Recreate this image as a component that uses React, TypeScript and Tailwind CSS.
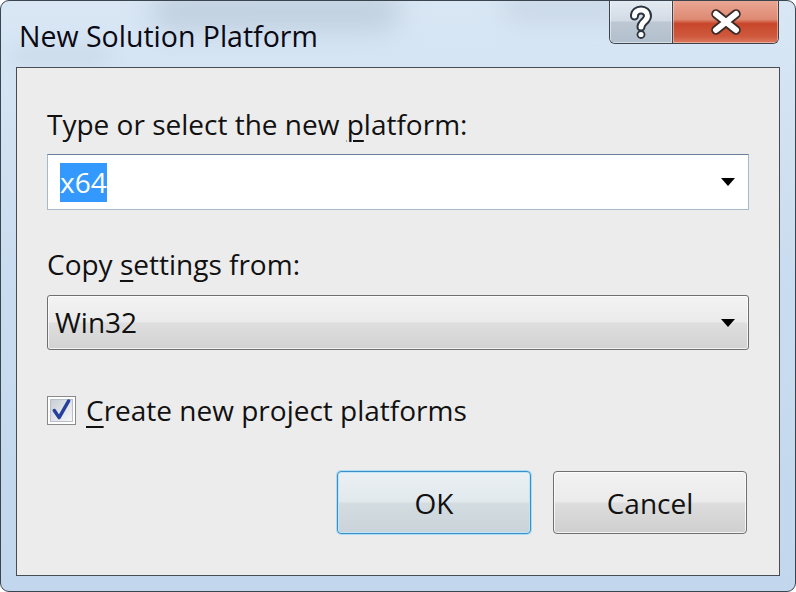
const font = { fontFamily: '"Open Sans", "Noto Sans", sans-serif' };

function Arrow() {
  return (
    <svg width="14" height="8" viewBox="0 0 14 8" className="shrink-0">
      <path d="M0 0 L14 0 L7 8 Z" fill="#000" />
    </svg>
  );
}

function HelpGlyph() {
  return (
    <svg width="26" height="34" viewBox="-13 -17 26 34">
      <path d="M-6.5 -6 C-6.5 -14, 6.5 -14, 6.5 -6 C6.5 -1, 0 0, 0 5" fill="none" stroke="#2b3440" strokeWidth="9" strokeLinecap="round" strokeLinejoin="round" />
      <circle cx="0" cy="12.5" r="4.4" fill="#2b3440" />
      <path d="M-6.5 -6 C-6.5 -14, 6.5 -14, 6.5 -6 C6.5 -1, 0 0, 0 5" fill="none" stroke="#ffffff" strokeWidth="5" strokeLinecap="round" strokeLinejoin="round" />
      <circle cx="0" cy="12.5" r="2.6" fill="#ffffff" />
    </svg>
  );
}

function CloseGlyph() {
  return (
    <svg width="32" height="26" viewBox="-16 -13 32 26">
      <path d="M-10 -8 L10 8 M10 -8 L-10 8" fill="none" stroke="#3a2a28" strokeWidth="9.5" strokeLinecap="round" />
      <path d="M-10 -8 L10 8 M10 -8 L-10 8" fill="none" stroke="#ffffff" strokeWidth="6" strokeLinecap="round" />
    </svg>
  );
}

function Check() {
  return (
    <div className="w-[29px] h-[29px] border border-[#8a8a8a] bg-white p-[2px] shrink-0">
      <div className="w-full h-full border border-[#b8bfc8] bg-[linear-gradient(135deg,#c9ced5_0%,#e4e7eb_60%,#f4f5f7_100%)] flex items-center justify-center">
        <svg width="22" height="22" viewBox="0 0 22 22">
          <path d="M3.5 11.5 L8.5 19 L18.5 1.5" fill="none" stroke="#263f9c" strokeWidth="3.6" strokeLinecap="round" strokeLinejoin="round" />
        </svg>
      </div>
    </div>
  );
}

export default function App() {
  return (
    <div className="w-[796px] h-[592px] bg-white" style={font}>
      <div className="w-[796px] h-[592px] rounded-[9px] border border-[#3a4550] bg-[linear-gradient(180deg,#d9e7f5_0%,#cadcef_45%,#c2d7ed_100%)] flex flex-col overflow-hidden relative">
        <div className="absolute left-[150px] top-[-10px] w-[250px] h-[40px] rounded-full bg-[#a9b9c9] opacity-50 blur-[14px]" />
        <div className="absolute left-[500px] top-[-8px] w-[130px] h-[30px] rounded-full bg-[#b4c3d2] opacity-40 blur-[12px]" />
        <div className="absolute left-[10px] top-[45px] w-[100px] h-[18px] rounded-full bg-[#b9c9d9] opacity-40 blur-[10px]" />
        {/* title bar */}
        <div className="h-[66px] flex items-start relative shrink-0">
          <div className="pl-[18px] pt-[17px] text-[28.5px] leading-[36px] text-[#0a0a14]">New Solution Platform</div>
          <div className="ml-auto mr-[16px] flex h-[44px] border border-t-0 border-[#3b434c] rounded-b-[6px] overflow-hidden mt-[-1px]">
            <div className="w-[62px] h-full flex items-center justify-center bg-[linear-gradient(180deg,#e4eaf1_0%,#d2dbe5_48%,#bcc7d3_52%,#b2bfcc_100%)] shadow-[inset_0_0_0_1px_rgba(255,255,255,0.5)]">
              <HelpGlyph />
            </div>
            <div className="w-px h-full bg-[#3b434c]" />
            <div className="w-[105px] h-full flex items-center justify-center bg-[linear-gradient(180deg,#eaa895_0%,#de8a73_45%,#c8462a_55%,#cf5a3e_85%,#dc7a5f_100%)] shadow-[inset_0_0_0_1px_rgba(255,220,210,0.5)]">
              <CloseGlyph />
            </div>
          </div>
        </div>
        {/* client */}
        <div className="mx-[15px] mb-[15px] flex-1 border border-[#474d55] bg-[#ececec] flex flex-col px-[30px] relative">
          <div className="mt-[38px] text-[28px] leading-[36px] text-[#111]">
            Type or select the new <span className="underline underline-offset-[5px] decoration-[2px]">p</span>latform:
          </div>
          <div className="mt-[12px] h-[56px] border border-[#a9b8ca] border-t-[#6a7f9b] bg-white flex items-center pl-[12px] pr-[13px]">
            <span className="bg-[#3399ff] text-white text-[28px] leading-[39px]">x64</span>
            <div className="flex-1" />
            <Arrow />
          </div>
          <div className="mt-[36px] text-[28px] leading-[36px] text-[#111]">
            Copy <span className="underline underline-offset-[5px] decoration-[2px]">s</span>ettings from:
          </div>
          <div className="mt-[13px] h-[55px] border border-[#6f6f6f] rounded-[3px] bg-[linear-gradient(180deg,#f3f3f3_0%,#ebebeb_48%,#dedede_52%,#d2d2d2_100%)] shadow-[inset_0_0_0_1px_rgba(255,255,255,0.7)] flex items-center pl-[7px] pr-[13px]">
            <span className="text-[28px] leading-[39px] text-[#111]">Win32</span>
            <div className="flex-1" />
            <Arrow />
          </div>
          <div className="mt-[42px] flex items-center gap-[10px]">
            <Check />
            <span className="text-[28px] leading-[36px] text-[#111]">
              <span className="underline underline-offset-[5px] decoration-[2px]">C</span>reate new project platforms
            </span>
          </div>
          <div className="mt-[43px] flex justify-end gap-[22px] mr-[2px]">
            <div className="w-[194px] h-[63px] rounded-[4px] border border-[#3c8fc4] shadow-[0_0_0_1px_#a9dcf5,inset_0_0_0_1px_#bfe6f8] bg-[linear-gradient(180deg,#eaf0f3_0%,#e2e9ed_48%,#d3dce1_52%,#c9d3d9_100%)] flex items-center justify-center text-[28px] text-[#111]">
              OK
            </div>
            <div className="w-[194px] h-[63px] rounded-[4px] border border-[#707070] shadow-[inset_0_0_0_1px_rgba(255,255,255,0.75)] bg-[linear-gradient(180deg,#f2f2f2_0%,#ebebeb_48%,#dddddd_52%,#cfcfcf_100%)] flex items-center justify-center text-[28px] text-[#111]">
              Cancel
            </div>
          </div>
        </div>
      </div>
    </div>
  );
}
